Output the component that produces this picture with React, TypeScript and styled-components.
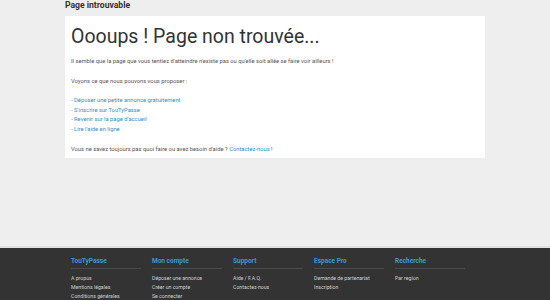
import styled, { createGlobalStyle } from 'styled-components';

const GlobalStyle = createGlobalStyle`
  html, body {
    margin: 0;
    padding: 0;
    background: #eeeeee;
    font-family: 'Roboto', 'Liberation Sans', sans-serif;
  }
`;

const Page = styled.div`
  min-height: 300px;
  display: flex;
  flex-direction: column;
`;

const Main = styled.main`
  width: 420px;
  margin: 0 auto;
`;

const PageTitle = styled.h2`
  margin: 0;
  height: 16px;
  font-size: 8.6px;
  line-height: 11px;
  font-weight: 700;
  color: #333;
`;

const Card = styled.section`
  background: #fff;
  height: 142px;
  box-sizing: border-box;
  padding: 7px 6px 0;
`;

const Heading = styled.h1`
  margin: 0 0 6px;
  font-size: 19.5px;
  line-height: 28px;
  font-weight: 400;
  color: #333;
`;

const Text = styled.p`
  margin: 0 0 10px;
  font-size: 5.8px;
  line-height: 9.6px;
  color: #555;
`;

const LinkList = styled.ul`
  list-style: none;
  margin: 0 0 10px;
  padding: 0;
  font-size: 5.8px;
  line-height: 9.6px;
`;

const Link = styled.a`
  color: #2f8fc4;
  text-decoration: none;
`;

const Footer = styled.footer`
  margin-top: auto;
  height: 52px;
  background: #333;
  border-top: 2px solid #e2e2e2;
`;

const FooterInner = styled.div`
  width: 420px;
  margin: 0 auto;
  display: flex;
`;

const Column = styled.div`
  width: 81px;
  padding: 9px 5px 0 6px;
  box-sizing: border-box;
`;

const ColTitle = styled.h3`
  margin: 0;
  padding: 0 0 2px 0;
  font-size: 6.5px;
  line-height: 9px;
  font-weight: 700;
  color: #3d98d3;
  border-bottom: 1px solid #4a4a4a;
`;

const ColLinks = styled.ul`
  list-style: none;
  margin: 4.5px 0 0;
  padding: 0;
  font-size: 5.2px;
  line-height: 9px;
  color: #d0d0d0;
`;

const columns = [
  { title: 'TouTyPasse', links: ['A propos', 'Mentions légales', 'Conditions générales'] },
  { title: 'Mon compte', links: ['Déposer une annonce', 'Créer un compte', 'Se connecter'] },
  { title: 'Support', links: ['Aide / F.A.Q.', 'Contactez-nous'] },
  { title: 'Espace Pro', links: ['Demande de partenariat', 'Inscription'] },
  { title: 'Recherche', links: ['Par region'] },
];

export default function App() {
  return (
    <Page>
      <GlobalStyle />
      <Main>
        <PageTitle>Page introuvable</PageTitle>
        <Card>
          <Heading>Oooups ! Page non trouvée...</Heading>
          <Text>
            Il semble que la page que vous tentiez d'atteindre n'existe pas ou qu'elle soit allée se faire voir ailleurs !
          </Text>
          <Text>Voyons ce que nous pouvons vous proposer :</Text>
          <LinkList>
            <li><Link href="#">- Déposer une petite annonce gratuitement</Link></li>
            <li><Link href="#">- S'inscrire sur TouTyPasse</Link></li>
            <li><Link href="#">- Revenir sur la page d'accueil</Link></li>
            <li><Link href="#">- Lire l'aide en ligne</Link></li>
          </LinkList>
          <Text>
            Vous ne savez toujours pas quoi faire ou avez besoin d'aide ? <Link href="#">Contactez-nous</Link> !
          </Text>
        </Card>
      </Main>
      <Footer>
        <FooterInner>
          {columns.map((c) => (
            <Column key={c.title}>
              <ColTitle>{c.title}</ColTitle>
              <ColLinks>
                {c.links.map((l) => (
                  <li key={l}>{l}</li>
                ))}
              </ColLinks>
            </Column>
          ))}
        </FooterInner>
      </Footer>
    </Page>
  );
}
